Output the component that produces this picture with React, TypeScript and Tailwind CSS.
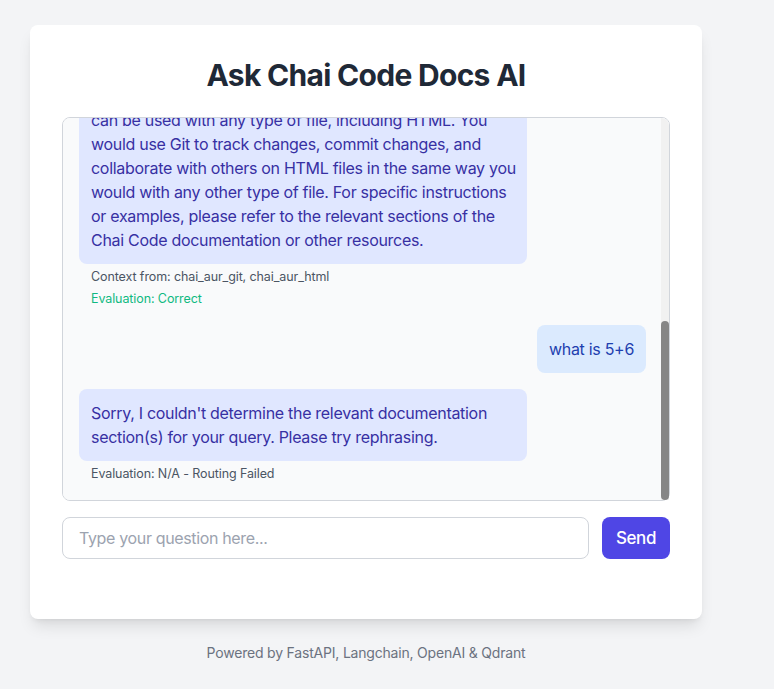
import { useEffect, useRef } from "react";

type Message = {
  role: "user" | "bot";
  lines: string[];
  context?: string;
  evaluation?: string;
  evalOk?: boolean;
};

const messages: Message[] = [
  { role: "user", lines: ["how do I use git with html files?"] },
  {
    role: "bot",
    lines: [
      "Git is a version control system that tracks changes to",
      "your files over time. It is not tied to any language, so it",
      "can be used with any type of file, including HTML. You",
      "would use Git to track changes, commit changes, and",
      "collaborate with others on HTML files in the same way you",
      "would with any other type of file. For specific instructions",
      "or examples, please refer to the relevant sections of the",
      "Chai Code documentation or other resources.",
    ],
    context: "Context from: chai_aur_git, chai_aur_html",
    evaluation: "Evaluation: Correct",
    evalOk: true,
  },
  { role: "user", lines: ["what is 5+6"] },
  {
    role: "bot",
    lines: [
      "Sorry, I couldn't determine the relevant documentation",
      "section(s) for your query. Please try rephrasing.",
    ],
    evaluation: "Evaluation: N/A - Routing Failed",
  },
];

export default function App() {
  const chatRef = useRef<HTMLDivElement>(null);

  useEffect(() => {
    // keep the latest message in view
    if (chatRef.current) {
      chatRef.current.scrollTop = chatRef.current.scrollHeight;
    }
  }, []);

  return (
    <div
      className="min-h-[689px] bg-[#f3f4f6] pl-[30px] pt-[25px]"
      style={{ fontFamily: "Inter, 'Noto Sans', sans-serif" }}
    >
      <div className="w-[672px]">
        <div className="bg-white rounded-lg shadow-lg px-8 pt-8 pb-[60px]">
          <h1 className="text-[30px] leading-9 font-bold text-[#1f2937] text-center tracking-[-0.7px] mb-6">
            Ask Chai Code Docs AI
          </h1>

          {/* Chat window */}
          <div className="relative">
            <div
              ref={chatRef}
              className="h-[384px] overflow-y-auto border border-[#d1d5db] rounded-lg bg-[#f9fafb] pt-4 pl-4 pr-[23px] pb-[18px] flex flex-col gap-4"
            >
              {messages.map((m, i) =>
                m.role === "user" ? (
                  <div key={i} className="flex justify-end shrink-0 mt-[2px]">
                    <div className="max-w-md bg-[#dbeafe] text-[#1e40af] rounded-lg px-3 py-3 text-base leading-6 tracking-[-0.3px]">
                      {m.lines.join(" ")}
                    </div>
                  </div>
                ) : (
                  <div key={i} className="flex flex-col items-start shrink-0">
                    <div className="w-[448px] bg-[#e0e7ff] text-[#3730a3] rounded-lg px-3 py-3 text-base leading-6 tracking-[-0.3px]">
                      {m.lines.map((l, j) => (
                        <div key={j} className="whitespace-nowrap">
                          {l}
                        </div>
                      ))}
                    </div>
                    {m.context && (
                      <div className="text-[12.5px] leading-4 text-[#4b5563] tracking-[-0.1px] px-3 mt-[5px]">
                        {m.context}
                      </div>
                    )}
                    {m.evaluation && (
                      <div
                        className={
                          m.evalOk
                            ? "text-[12.5px] leading-4 text-[#10b981] tracking-[-0.1px] px-3 mt-[6px]"
                            : "text-[12.5px] leading-4 text-[#4b5563] tracking-[-0.1px] px-3 mt-[5px]"
                        }
                      >
                        {m.evaluation}
                      </div>
                    )}
                  </div>
                ),
              )}
            </div>
            {/* scrollbar */}
            <div className="absolute top-[1px] bottom-[1px] right-[1px] w-[8px] bg-[#f1f1f1] rounded-tr-lg">
              <div className="absolute bottom-0 left-0 w-[8px] h-[179px] bg-[#868686] rounded-full" />
            </div>
          </div>

          {/* Input row */}
          <div className="flex gap-[13px] mt-4">
            <input
              type="text"
              placeholder="Type your question here..."
              className="flex-1 border border-[#d1d5db] rounded-lg px-4 py-2 text-base leading-6 tracking-[-0.35px] text-[#1f2937] placeholder:text-[#9ca3af] outline-none"
            />
            <button className="w-[68px] bg-[#4f46e5] text-white rounded-lg py-2 text-[17px] leading-6 font-medium tracking-[-0.4px] text-center">
              Send
            </button>
          </div>
        </div>

        <p className="text-center text-sm text-[#6b7280] tracking-[-0.2px] mt-6">
          Powered by FastAPI, Langchain, OpenAI &amp; Qdrant
        </p>
      </div>
    </div>
  );
}
